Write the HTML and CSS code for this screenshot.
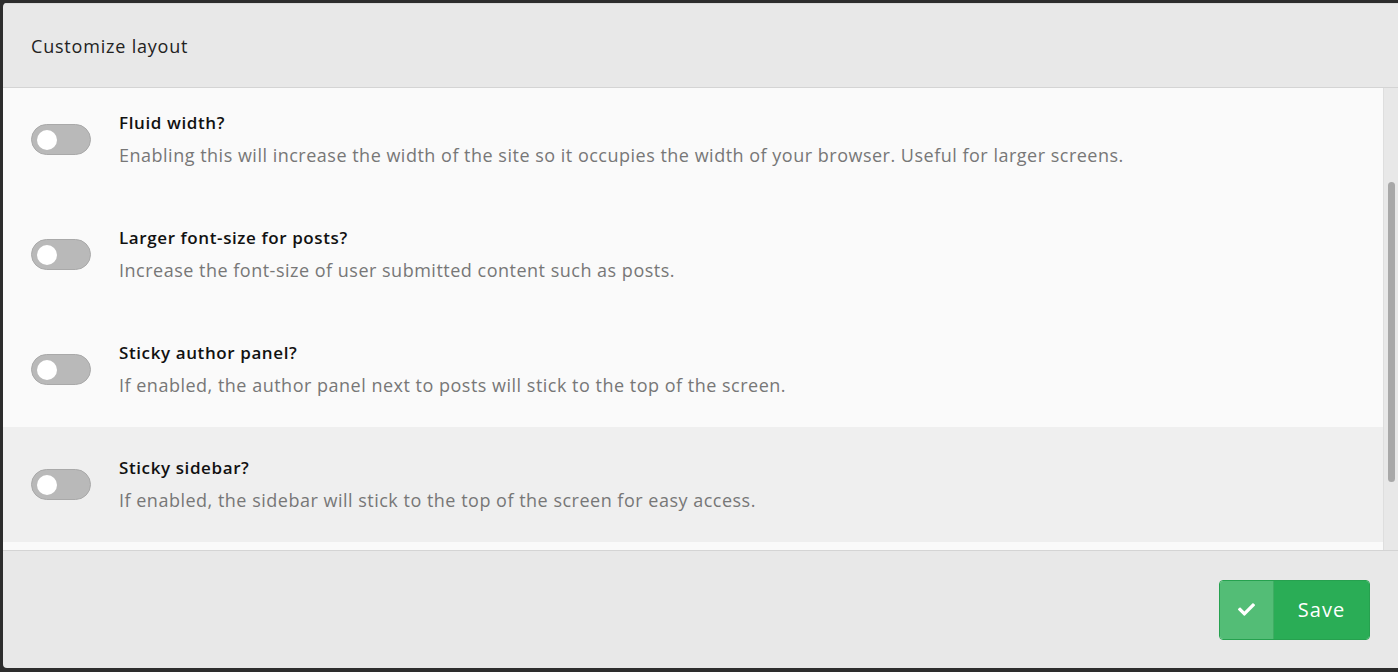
FILE: index.html
```html
<!DOCTYPE html>
<html lang="en">
<head>
  <meta charset="UTF-8" />
  <title>Customize layout</title>
  <link rel="stylesheet" href="styles.css">
</head>
<body>

  <div class="modal">
    <div class="modal-header">
      <h3>Customize layout</h3>
    </div>

    <div class="modal-body">
      <div class="option-list">
        <div class="option">
          <span class="toggle"><span class="knob"></span></span>
          <div class="option-text">
            <div class="option-title">Fluid width?</div>
            <div class="option-desc">Enabling this will increase the width of the site so it occupies the width of your browser. Useful for larger screens.</div>
          </div>
        </div>

        <div class="option">
          <span class="toggle"><span class="knob"></span></span>
          <div class="option-text">
            <div class="option-title">Larger font-size for posts?</div>
            <div class="option-desc">Increase the font-size of user submitted content such as posts.</div>
          </div>
        </div>

        <div class="option">
          <span class="toggle"><span class="knob"></span></span>
          <div class="option-text">
            <div class="option-title">Sticky author panel?</div>
            <div class="option-desc">If enabled, the author panel next to posts will stick to the top of the screen.</div>
          </div>
        </div>

        <div class="option active">
          <span class="toggle"><span class="knob"></span></span>
          <div class="option-text">
            <div class="option-title">Sticky sidebar?</div>
            <div class="option-desc">If enabled, the sidebar will stick to the top of the screen for easy access.</div>
          </div>
        </div>
      </div>

      <div class="scrollbar"><div class="scroll-thumb"></div></div>
    </div>

    <div class="modal-footer">
      <button type="button" class="btn-save">
        <span class="btn-icon">
          <svg width="17" height="13" viewBox="0 64 512 384" aria-hidden="true">
            <path fill="#fff" d="M173.9 439.4l-166.4-166.4c-10-10-10-26.2 0-36.2l36.2-36.2c10-10 26.2-10 36.2 0L192 312.7 432.1 72.6c10-10 26.2-10 36.2 0l36.2 36.2c10 10 10 26.2 0 36.2l-294.4 294.4c-10 10-26.2 10-36.2 0z"/>
          </svg>
        </span>
        <span class="btn-label">Save</span>
      </button>
    </div>
  </div>

</body>
</html>
```

FILE: styles.css
```css
body {
  margin: 0;
  background: #2d2d2d;
  font-family: "Open Sans", Arial, sans-serif;
  height: 100vh;
  overflow: hidden;
}

.modal {
  margin: 3px 0 0 3px;
  height: 665px;
  background: #e8e8e8;
  border-radius: 4px 0 0 4px;
  display: flex;
  flex-direction: column;
  overflow: hidden;
}

.modal-header {
  height: 83px;
  flex: none;
  display: flex;
  align-items: center;
  padding: 0 28px;
  border-top: 1px solid #dcdcdc;
  border-bottom: 1px solid #d4d4d4;
}

.modal-header h3 {
  margin: 0;
  font-size: 18px;
  font-weight: 500;
  letter-spacing: 0.8px;
  color: #222;
}

.modal-body {
  height: 462px;
  flex: none;
  display: flex;
  background: #fafafa;
}

/* list is scrolled a little, first row starts just above the edge */
.option-list {
  flex: 1;
  overflow: hidden;
}

.option-list .option:first-child {
  margin-top: -6px;
}

.scrollbar {
  width: 14px;
  flex: none;
  background: #e8e8e8;
  border-left: 1px solid #dedede;
}

.scroll-thumb {
  margin: 94px 3px 0 4px;
  height: 300px;
  background: #a8a8a8;
  border-radius: 4px;
}

.option {
  height: 115px;
  display: flex;
  align-items: center;
  padding-left: 28px;
}

.option.active {
  background: #efefef;
}

.toggle {
  flex: none;
  width: 53px;
  height: 29px;
  border: 1px solid #a9a9a9;
  border-radius: 16px;
  background: #b9b9b9;
  display: flex;
  align-items: center;
  padding-left: 5px;
  margin-right: 28px;
}

.knob {
  width: 20px;
  height: 20px;
  border-radius: 50%;
  background: #fff;
}

.option-text {
  padding-top: 4px;
}

.option-title {
  font-size: 17px;
  font-weight: 600;
  letter-spacing: 0.6px;
  color: #111;
  line-height: 24px;
  margin-top: -4px;
}

.option-desc {
  font-size: 18px;
  letter-spacing: 0.5px;
  color: #777;
  line-height: 26px;
  margin-top: 7px;
}

.modal-footer {
  flex: 1;
  display: flex;
  align-items: center;
  justify-content: flex-end;
  padding-right: 28px;
  border-top: 1px solid #d4d4d4;
}

.btn-save {
  display: flex;
  height: 60px;
  width: 151px;
  padding: 0;
  border: 1px solid #26a14f;
  border-radius: 4px;
  overflow: hidden;
  cursor: pointer;
  font-family: inherit;
}

.btn-icon {
  width: 53px;
  background: #53bd76;
  display: flex;
  align-items: center;
  justify-content: center;
  border-right: 1px solid #3fae63;
}

.btn-label {
  flex: 1;
  background: #2aad56;
  color: #fff;
  font-size: 20px;
  font-weight: 500;
  letter-spacing: 1px;
  display: flex;
  align-items: center;
  justify-content: center;
}
```
